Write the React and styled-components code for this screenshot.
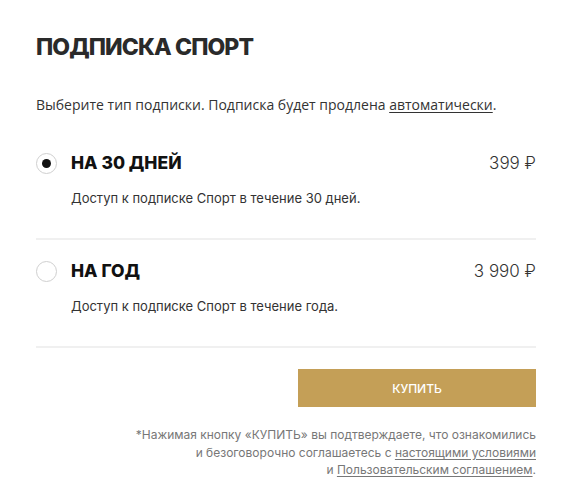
import styled, { createGlobalStyle } from "styled-components";

//#region Styles
const GlobalStyle = createGlobalStyle`
	body {
		margin: 0;
		background: #fff;
		font-family: Inter, "Noto Sans", sans-serif;
		color: #222;
	}
`;

const Page = styled.div`
	width: 572px;
	box-sizing: border-box;
	padding: 33px 36px 0 36px;
`;

const Title = styled.h1`
	margin: 0;
	font-size: 23px;
	line-height: 28px;
	font-weight: 800;
	color: #2a2a2a;
	letter-spacing: -0.9px;
`;

const Intro = styled.p`
	margin: 35px 0 0;
	font-family: "Open Sans", sans-serif;
	font-size: 14px;
	line-height: 18px;
	color: #333;

	a {
		color: #333;
		text-decoration: underline;
		text-underline-offset: 2px;
	}
`;

const Options = styled.div`
	margin-top: 38px;
`;

const Option = styled.label`
	display: grid;
	grid-template-columns: 35px 1fr auto;
	align-items: center;
	row-gap: 16px;
	padding: ${(p) => (p.$first ? "0" : "20px")} 0 32px;
	border-bottom: 2px solid #f0f0f0;
	cursor: pointer;
`;

const Radio = styled.span`
	width: 19px;
	height: 19px;
	border: 1px solid #cfcfcf;
	border-radius: 50%;
	display: flex;
	align-items: center;
	justify-content: center;

	&::after {
		content: "";
		width: 9px;
		height: 9px;
		border-radius: 50%;
		background: ${(p) => (p.$checked ? "#111" : "transparent")};
	}
`;

const Name = styled.span`
	font-size: 17.5px;
	line-height: 22px;
	font-weight: 800;
	color: #111;
`;

const Price = styled.span`
	font-size: 17px;
	font-weight: 300;
	color: #333;
`;

const Desc = styled.span`
	grid-column: 2 / 4;
	font-size: 13px;
	line-height: 16px;
	color: #333;
`;

const Footer = styled.div`
	display: flex;
	flex-direction: column;
	align-items: flex-end;
	padding-top: 21px;
`;

const BuyButton = styled.button`
	width: 238px;
	height: 38px;
	border: none;
	background: #c49f57;
	color: #fff;
	font-family: Inter, sans-serif;
	font-size: 12px;
	font-weight: 500;
	cursor: pointer;
`;

const Note = styled.p`
	margin: 19px 0 0;
	text-align: right;
	font-size: 12px;
	line-height: 17.5px;
	color: #777;

	a {
		color: #777;
		text-decoration: underline;
		text-underline-offset: 2px;
	}
`;
//#endregion

const plans = [
	{ id: "month", name: "НА 30 ДНЕЙ", price: "399 ₽", desc: "Доступ к подписке Спорт в течение 30 дней.", checked: true },
	{ id: "year", name: "НА ГОД", price: "3 990 ₽", desc: "Доступ к подписке Спорт в течение года.", checked: false },
];

function App() {
	return (
		<Page>
			<GlobalStyle />
			<Title>ПОДПИСКА СПОРТ</Title>
			<Intro>
				Выберите тип подписки. Подписка будет продлена <a href="#">автоматически</a>.
			</Intro>
			<Options>
				{plans.map((plan, i) => (
					<Option key={plan.id} $first={i === 0}>
						<Radio $checked={plan.checked} />
						<Name>{plan.name}</Name>
						<Price>{plan.price}</Price>
						<Desc>{plan.desc}</Desc>
					</Option>
				))}
			</Options>
			<Footer>
				<BuyButton>КУПИТЬ</BuyButton>
				<Note>
					*Нажимая кнопку «КУПИТЬ» вы подтверждаете, что ознакомились
					<br />
					и безоговорочно соглашаетесь с <a href="#">настоящими условиями</a>
					<br />
					и <a href="#">Пользовательским соглашением</a>.
				</Note>
			</Footer>
		</Page>
	);
}

export default App;
